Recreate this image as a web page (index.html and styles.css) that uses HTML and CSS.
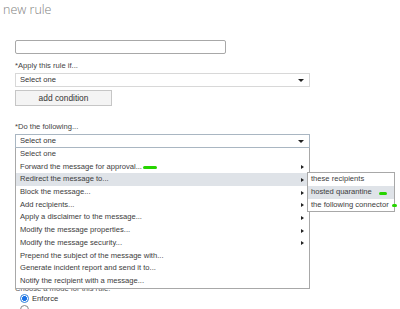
FILE: index.html
```html
<!DOCTYPE html>
<html>
<head>
<meta charset="utf-8">
<link rel="stylesheet" href="styles.css">
</head>
<body>
<div class="page">
  <h1 class="title">new rule</h1>
  <div class="form">
    <div class="name-input"></div>
    <div class="label label-apply">*Apply this rule if...</div>
    <div class="select"><span>Select one</span><span class="caret"></span></div>
    <div class="button">add condition</div>
    <div class="label label-do">*Do the following...</div>
    <div class="select-wrap">
      <div class="select select-open"><span>Select one</span><span class="caret"></span></div>
      <ul class="list">
        <li>Select one</li>
        <li class="sub">Forward the message for approval... <i class="mark mark-fwd"></i></li>
        <li class="sub active">Redirect the message to...
          <ul class="submenu">
            <li>these recipients</li>
            <li class="active">hosted quarantine <i class="mark mark-hq"></i></li>
            <li>the following connector<i class="mark mark-conn"></i></li>
          </ul>
        </li>
        <li class="sub">Block the message...</li>
        <li class="sub">Add recipients...</li>
        <li class="sub">Apply a disclaimer to the message...</li>
        <li class="sub">Modify the message properties...</li>
        <li class="sub">Modify the message security...</li>
        <li>Prepend the subject of the message with...</li>
        <li>Generate incident report and send it to...</li>
        <li>Notify the recipient with a message...</li>
      </ul>
    </div>
    <div class="label label-mode">Choose a mode for this rule:</div>
    <div class="radio-row"><span class="radio checked"></span><span>Enforce</span></div>
    <div class="radio-row"><span class="radio"></span></div>
  </div>
</div>
</body>
</html>
```

FILE: styles.css
```css
html, body {
  margin: 0;
  padding: 0;
  background: #ffffff;
  overflow: hidden;
}
body {
  width: 400px;
  height: 309px;
  font-family: "Liberation Sans", Arial, sans-serif;
  color: #333333;
}
.title {
  margin: 0;
  padding: 2px 0 0 3px;
  font-family: "Open Sans", "Liberation Sans", sans-serif;
  font-size: 12.5px;
  font-weight: 300;
  color: #808080;
  line-height: 16px;
  height: 20px;
}
.form {
  padding: 18px 0 0 15px;
  font-size: 7.6px;
}
.name-input {
  width: 209px;
  height: 12px;
  border: 1px solid #a8a8a8;
  border-radius: 2px;
  background: #fff;
}
.label {
  line-height: 10px;
  color: #444;
}
.label-apply {
  margin-top: 7px;
  height: 12px;
}
.select {
  width: 289px;
  height: 12px;
  border: 1px solid #d8d8d8;
  background: #fff;
  display: flex;
  align-items: center;
  justify-content: space-between;
  padding: 0 0 0 4px;
  line-height: 12px;
  color: #333;
}
.caret {
  width: 0;
  height: 0;
  border-left: 3px solid transparent;
  border-right: 3px solid transparent;
  border-top: 3px solid #222;
  margin-right: 5px;
}
.button {
  margin-top: 3px;
  width: 95px;
  height: 14px;
  border: 1px solid #c6c6c6;
  background: #f4f4f4;
  text-align: center;
  line-height: 14px;
  font-size: 8.4px;
  color: #333;
}
.label-do {
  margin-top: 16px;
  height: 12px;
}
.select-wrap {
  position: relative;
}
.select-open {
  border-color: #a9b6c2;
}
.list {
  position: absolute;
  left: 0;
  top: 14px;
  margin: 0;
  padding: 0;
  list-style: none;
  width: 293px;
  border: 1px solid #a8a8a8;
  border-top: none;
  background: #fff;
  z-index: 5;
}
.list > li {
  position: relative;
  height: 12.7px;
  line-height: 12.7px;
  padding-left: 4px;
  white-space: nowrap;
  color: #3c3c3c;
}
.list > li.active {
  background: #dfe3e8;
}
.list > li.sub::after {
  content: "";
  position: absolute;
  right: 5px;
  top: 4.5px;
  width: 0;
  height: 0;
  border-top: 2px solid transparent;
  border-bottom: 2px solid transparent;
  border-left: 3px solid #222;
}
.submenu {
  position: absolute;
  left: 291px;
  top: -1px;
  margin: 0;
  padding: 0;
  list-style: none;
  width: 86px;
  border: 1px solid #a8a8a8;
  background: #fff;
  z-index: 6;
}
.submenu li {
  position: relative;
  height: 12.7px;
  line-height: 12.7px;
  padding-left: 3px;
  white-space: nowrap;
  color: #3c3c3c;
}
.submenu li.active {
  background: #dfe3e8;
}
.mark {
  position: absolute;
  display: block;
  height: 3px;
  border-radius: 2px;
  background: #27d400;
}
.mark-fwd {
  left: 127px;
  top: 5.5px;
  width: 14px;
}
.mark-hq {
  left: 71px;
  top: 6px;
  width: 8px;
}
.mark-conn {
  left: 84px;
  top: 5px;
  width: 5px;
}
.label-mode {
  margin-top: 136px;
  height: 9px;
  line-height: 9px;
  color: #555;
}
.radio-row {
  display: flex;
  align-items: center;
  gap: 3px;
  height: 11px;
  margin-left: 5px;
  color: #333;
}
.radio {
  width: 7px;
  height: 7px;
  border-radius: 50%;
  border: 1px solid #888;
  background: #fff;
}
.radio.checked {
  border-color: #2d7fd9;
  background: radial-gradient(circle, #1a73e8 0, #1a73e8 2.2px, #fff 2.6px);
}
```
